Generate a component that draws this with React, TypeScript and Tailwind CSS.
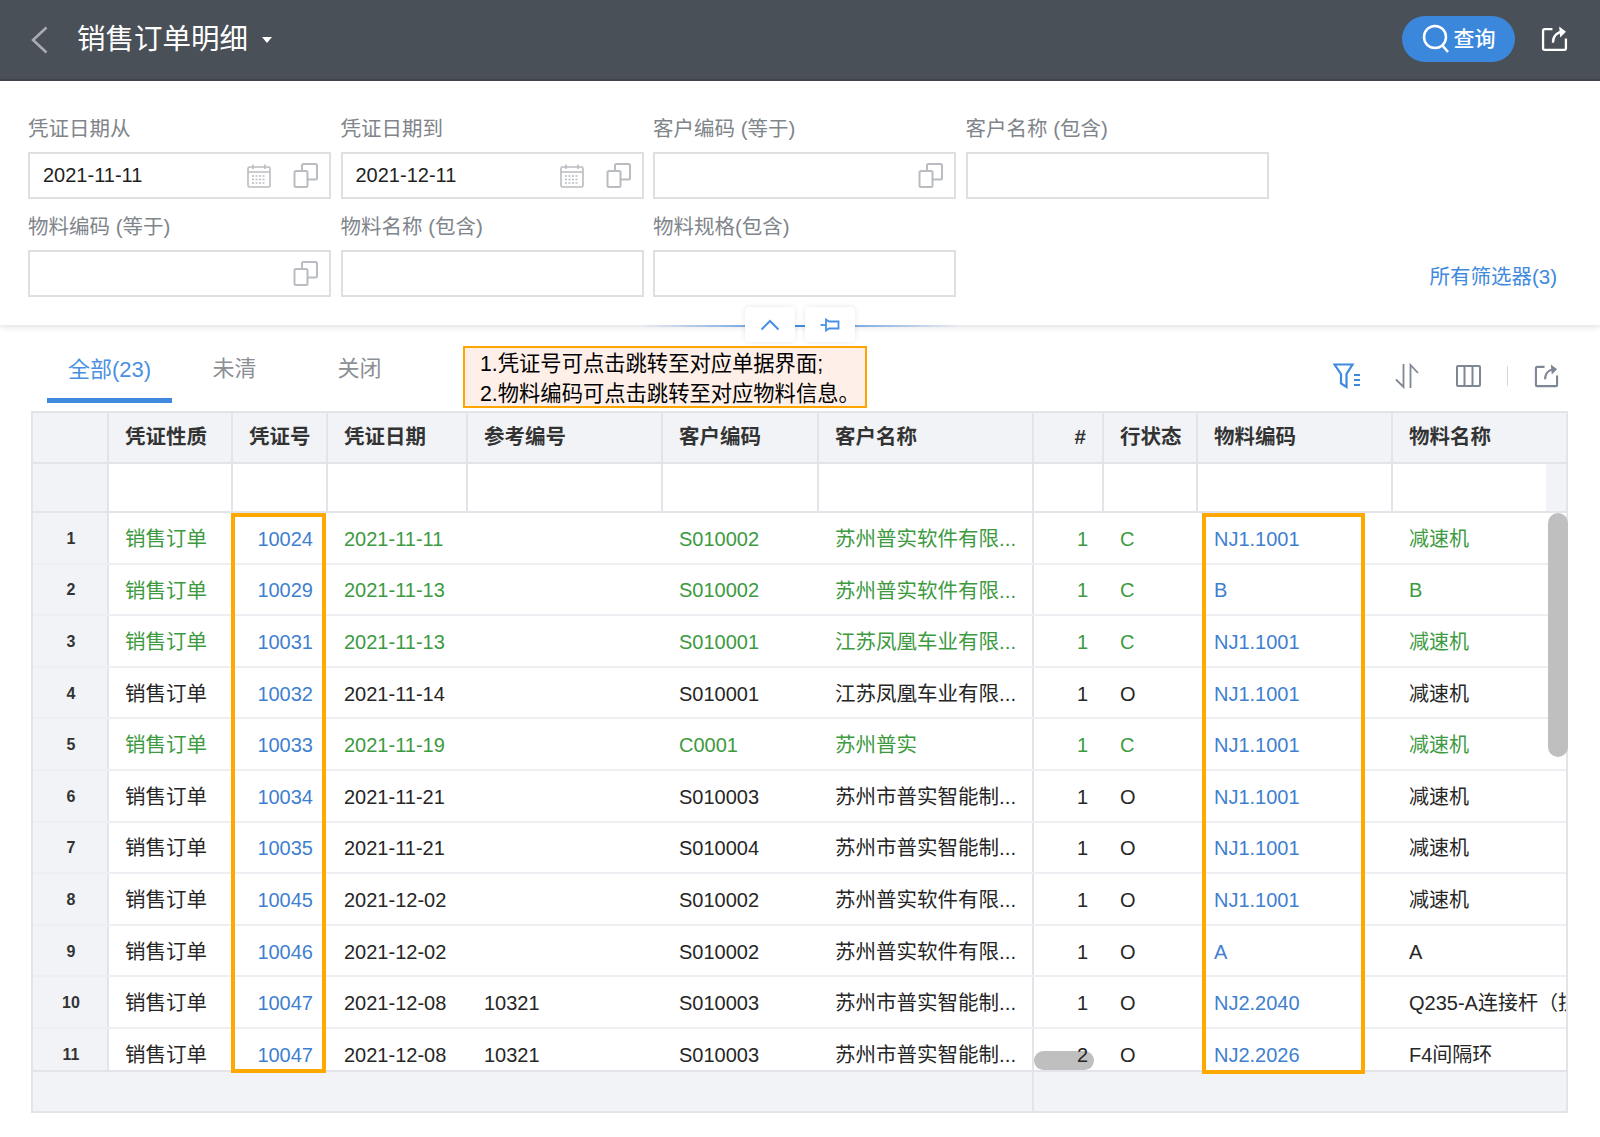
import React from 'react';

const COLS = 'grid grid-cols-[76px_124px_95px_140px_195px_156px_215px_70px_94px_195px_173px]';

const headers = ['', '凭证性质', '凭证号', '凭证日期', '参考编号', '客户编码', '客户名称', '#', '行状态', '物料编码', '物料名称'];

type Row = {
  no: number;
  voucher: string;
  date: string;
  ref?: string;
  cust: string;
  custName: string;
  qty: number;
  status: string;
  code: string;
  name: string;
};

const SZ = '苏州普实软件有限...';
const JS = '江苏凤凰车业有限...';
const ZN = '苏州市普实智能制...';

const rows: Row[] = [
  { no: 1, voucher: '10024', date: '2021-11-11', cust: 'S010002', custName: SZ, qty: 1, status: 'C', code: 'NJ1.1001', name: '减速机' },
  { no: 2, voucher: '10029', date: '2021-11-13', cust: 'S010002', custName: SZ, qty: 1, status: 'C', code: 'B', name: 'B' },
  { no: 3, voucher: '10031', date: '2021-11-13', cust: 'S010001', custName: JS, qty: 1, status: 'C', code: 'NJ1.1001', name: '减速机' },
  { no: 4, voucher: '10032', date: '2021-11-14', cust: 'S010001', custName: JS, qty: 1, status: 'O', code: 'NJ1.1001', name: '减速机' },
  { no: 5, voucher: '10033', date: '2021-11-19', cust: 'C0001', custName: '苏州普实', qty: 1, status: 'C', code: 'NJ1.1001', name: '减速机' },
  { no: 6, voucher: '10034', date: '2021-11-21', cust: 'S010003', custName: ZN, qty: 1, status: 'O', code: 'NJ1.1001', name: '减速机' },
  { no: 7, voucher: '10035', date: '2021-11-21', cust: 'S010004', custName: ZN, qty: 1, status: 'O', code: 'NJ1.1001', name: '减速机' },
  { no: 8, voucher: '10045', date: '2021-12-02', cust: 'S010002', custName: SZ, qty: 1, status: 'O', code: 'NJ1.1001', name: '减速机' },
  { no: 9, voucher: '10046', date: '2021-12-02', cust: 'S010002', custName: SZ, qty: 1, status: 'O', code: 'A', name: 'A' },
  { no: 10, voucher: '10047', date: '2021-12-08', ref: '10321', cust: 'S010003', custName: ZN, qty: 1, status: 'O', code: 'NJ2.2040', name: 'Q235-A连接杆（技术' },
  { no: 11, voucher: '10047', date: '2021-12-08', ref: '10321', cust: 'S010003', custName: ZN, qty: 2, status: 'O', code: 'NJ2.2026', name: 'F4间隔环' },
];

const CopyIcon = () => (
  <svg width="26" height="25" viewBox="0 0 26 25" fill="none" stroke="#b9bcc0" strokeWidth="2">
    <rect x="1.500" y="8" width="13" height="16" rx="1.500" />
    <path d="M9 8V2.500A1.500 1.500 0 0 1 10.500 1h12A1.500 1.500 0 0 1 24 2.500V15a1.500 1.500 0 0 1-1.500 1.500H14.500" />
  </svg>
);

const CalendarIcon = () => (
  <svg width="24" height="24" viewBox="0 0 24 24" fill="none" stroke="#b9bcc0" strokeWidth="1.600">
    <rect x="1" y="3" width="22" height="20" rx="1.500" />
    <path d="M1 8h22M6 0.500v4.500M18 0.500v4.500" />
    <path d="M5 12h14M5 15.500h14M5 19h14" strokeDasharray="2 1.500" />
  </svg>
);

const ShareIcon = ({ color, size }: { color: string; size: number }) => (
  <svg width={size} height={size} viewBox="0 0 26 26" fill="none" stroke={color} strokeWidth="2.200">
    <path d="M11 4H3.500A1.500 1.500 0 0 0 2 5.500v17A1.500 1.500 0 0 0 3.500 24h19a1.500 1.500 0 0 0 1.500-1.500V13" />
    <path d="M11.500 17c0-6 3.500-10.500 11-10.500" />
    <path d="M17.500 1.500l6.500 5-5.500 5.500" fill={color} stroke="none" />
  </svg>
);

const Field = ({ label, value, calendar, copy }: { label: string; value?: string; calendar?: boolean; copy?: boolean }) => (
  <div>
    <div className="h-[48px] pt-[2px] flex items-center text-[20.500px] text-[#80858b] whitespace-nowrap">{label}</div>
    <div className="h-[47px] border-2 border-[#dedfe1] flex items-center pl-[13px] pr-[10px] text-[20px] text-[#1f1f1f]">
      <span className="flex-1 pb-[1px]">{value}</span>
      {calendar && (
        <span className="mr-[22px] flex">
          <CalendarIcon />
        </span>
      )}
      {copy && <CopyIcon />}
    </div>
  </div>
);

const Bar = () => (
  <div className="relative h-[244px] pt-[23px] pl-[28px] pr-[43px] flex shadow-[0_2px_6px_rgba(0,0,0,0.12)] z-10 bg-white">
    <div className="grid grid-cols-[repeat(4,303px)] gap-x-[9.500px] gap-y-[3px] self-start">
      <Field label="凭证日期从" value="2021-11-11" calendar copy />
      <Field label="凭证日期到" value="2021-12-11" calendar copy />
      <Field label="客户编码 (等于)" copy />
      <Field label="客户名称 (包含)" />
      <Field label="物料编码 (等于)" copy />
      <Field label="物料名称 (包含)" />
      <Field label="物料规格(包含)" />
    </div>
    <a className="ml-auto mt-[159px] h-[28px] leading-[28px] text-[20.500px] text-[#3f8ade] whitespace-nowrap">所有筛选器(3)</a>
    {/* collapse handle sits over the divider */}
    <div className="absolute left-[640px] top-[244px] w-[320px] h-[2px] bg-gradient-to-r from-transparent via-[#3f8ade] to-transparent" />
    <div className="absolute left-[745px] top-[226px] flex gap-[10px]">
      <div className="w-[50px] h-[35px] bg-white rounded shadow-[0_0_5px_rgba(0,0,0,0.1)] flex items-center justify-center">
        <svg width="20" height="12" viewBox="0 0 20 12" fill="none" stroke="#4a90e2" strokeWidth="2">
          <path d="M1.500 10.500L10 2l8.500 8.500" />
        </svg>
      </div>
      <div className="w-[50px] h-[35px] bg-white rounded shadow-[0_0_5px_rgba(0,0,0,0.1)] flex items-center justify-center">
        <svg width="20" height="14" viewBox="0 0 20 14" fill="none" stroke="#4a90e2" strokeWidth="1.800">
          <path d="M0.500 7H6" />
          <path d="M6 1.500L9 3.500H18.500V10.500H9L6 12.500Z" />
        </svg>
      </div>
    </div>
  </div>
);

const App: React.FC = () => {
  return (
    <div className="w-[1600px] h-[1137px] overflow-hidden bg-white [font-family:'Liberation_Sans','Noto_Sans_CJK_SC',sans-serif]">
      <header className="h-[81px] bg-[#4a5057] border-b-2 border-[#42474d] flex items-center pl-[31px] pr-[32px]">
        <svg width="17" height="28" viewBox="0 0 17 28" fill="none" stroke="#a9adb1" strokeWidth="2.500">
          <path d="M15.500 1.500L2 14l13.500 12.500" />
        </svg>
        <h1 className="ml-[29px] text-[28.500px] leading-none font-normal text-white whitespace-nowrap">销售订单明细</h1>
        <span className="ml-[14px] w-0 h-0 border-x-[5px] border-x-transparent border-t-[6px] border-t-white" />
        <button className="ml-auto mb-[2px] w-[113px] h-[46px] rounded-full bg-[#3b87dc] flex items-center justify-center gap-[4px] text-white text-[21px] font-medium">
          <svg width="28" height="30" viewBox="0 0 28 30" fill="none" stroke="white" strokeWidth="2.500">
            <circle cx="13" cy="13" r="11" />
            <path d="M20 21l6 7" />
          </svg>
          查询
        </button>
        <span className="ml-[26px] mb-[2px] flex">
          <ShareIcon color="#ffffff" size={27} />
        </span>
      </header>

      <Bar />

      <div className="h-[86px] pt-[15px] pl-[47px] pr-[41px] flex items-start">
        <div className="w-[125px] h-[63px] border-b-[5px] border-[#3f8ade] text-[#4a90e2] text-[22px] flex items-center justify-center">全部(23)</div>
        <div className="w-[125px] h-[63px] text-[#8c8f93] text-[22px] flex items-center justify-center pb-[6px]">未清</div>
        <div className="w-[125px] h-[63px] text-[#8c8f93] text-[22px] flex items-center justify-center pb-[6px]">关闭</div>
        <div className="ml-[41px] mt-[6px] w-[404px] h-[62px] border-2 border-[#ffa500] bg-[#fef0e9] pl-[15px] pt-[2px] text-[21.300px] leading-[29.500px] text-black whitespace-nowrap">
          <div>1.凭证号可点击跳转至对应单据界面;</div>
          <div>2.物料编码可点击跳转至对应物料信息。</div>
        </div>
        <div className="ml-auto mt-[23px] h-[25px] flex items-center">
          <svg width="28" height="26" viewBox="0 0 28 26" fill="none" stroke="#3f8ade" strokeWidth="2.200">
            <path d="M1.500 1.500h18L13.500 11v13L8 20.500V11z" />
            <path d="M21 12h6M21 17h6M21 22h6" />
          </svg>
          <svg className="ml-[33px]" width="26" height="26" viewBox="0 0 26 26" fill="none" stroke="#7e8894" strokeWidth="1.800">
            <path d="M9.500 1v23L2 16.500" />
            <path d="M16.500 25V2l7.500 8" />
          </svg>
          <svg className="ml-[36px]" width="25" height="22" viewBox="0 0 25 22" fill="none" stroke="#7e8894" strokeWidth="2">
            <rect x="1" y="1" width="23" height="20" rx="1" />
            <path d="M8.500 1v20M16.500 1v20" />
          </svg>
          <span className="ml-[26px] w-[1px] h-[20px] bg-[#d5d7da]" />
          <span className="ml-[26px] flex">
            <ShareIcon color="#7e8894" size={25} />
          </span>
        </div>
      </div>

      <div className="relative ml-[31px] w-[1537px] h-[702px] border-2 border-[#e2e4ea] text-[20px] text-[#262626]">
        <div className={`${COLS} h-[51px] bg-[#f2f3f7] border-b-2 border-[#e2e4ea] font-bold text-[#333] text-[20.500px]`}>
          {headers.map((h, i) => (
            <div key={i} className={`px-4 flex items-center whitespace-nowrap border-r-2 border-[#e2e4ea] last:border-r-0 ${i === 7 ? 'justify-end' : ''}`}>
              {h}
            </div>
          ))}
        </div>

        <div className={`${COLS} h-[49px] border-b-2 border-[#e2e4ea]`}>
          {headers.map((h, i) => (
            <div key={i} className={`flex justify-end border-r-2 border-[#e2e4ea] last:border-r-0 ${i === 0 ? 'bg-[#f2f3f7]' : ''}`}>
              {i === 10 && <span className="w-[20px] bg-[#f2f3f7]" />}
            </div>
          ))}
        </div>

        <div className="h-[557px] overflow-hidden">
          {rows.map((r) => {
            const closed = r.status === 'C';
            const tone = closed ? 'text-[#3d9a3f]' : 'text-[#262626]';
            return (
              <div key={r.no} className={`${COLS} h-[51.600px] border-b-2 border-[#eeeff3] items-stretch ${tone}`}>
                <div className="bg-[#f2f3f7] pt-[2px] pl-[2px] flex items-center justify-center text-[16px] font-bold text-[#333] border-r-2 border-[#e2e4ea]">{r.no}</div>
                <div className="pt-[3px] px-4 flex items-center text-[20.500px]">销售订单</div>
                <div className="pt-[2px] pr-[15px] flex items-center justify-end text-[#3f7fd0]">{r.voucher}</div>
                <div className="pt-[2px] px-4 flex items-center">{r.date}</div>
                <div className="pt-[2px] px-4 flex items-center text-[#262626]">{r.ref}</div>
                <div className="pt-[2px] px-4 flex items-center">{r.cust}</div>
                <div className="pt-[3px] px-4 flex items-center whitespace-nowrap border-r-2 border-[#e2e4ea] text-[20.500px]">{r.custName}</div>
                <div className="relative z-10 pt-[2px] px-4 flex items-center justify-end">{r.qty}</div>
                <div className="pt-[2px] px-4 flex items-center">{r.status}</div>
                <div className="pt-[2px] px-4 flex items-center text-[#3f7fd0]">{r.code}</div>
                <div className="pt-[2px] pl-4 flex items-center whitespace-nowrap overflow-hidden">{r.name}</div>
              </div>
            );
          })}
        </div>

        <div className="h-[41px] bg-[#f2f3f7] border-t-2 border-[#e2e4ea] flex">
          <div className="w-[1001px] border-r-2 border-[#e2e4ea]" />
        </div>

        {/* highlight frames and scrollbars lie over the grid */}
        <div className="absolute left-[198px] top-[100px] w-[95px] h-[560px] border-4 border-[#ffa800] pointer-events-none z-20" />
        <div className="absolute left-[1169px] top-[100px] w-[163px] h-[561px] border-4 border-[#ffa800] pointer-events-none z-20" />
        <div className="absolute left-[1515px] top-[100px] w-[20px] h-[244px] rounded-[10px] bg-[#bfbfbf]" />
        <div className="absolute left-[1001px] top-[638px] w-[60px] h-[19px] rounded-[10px] bg-[#bfbfbf]" />
      </div>
    </div>
  );
};

export default App;
